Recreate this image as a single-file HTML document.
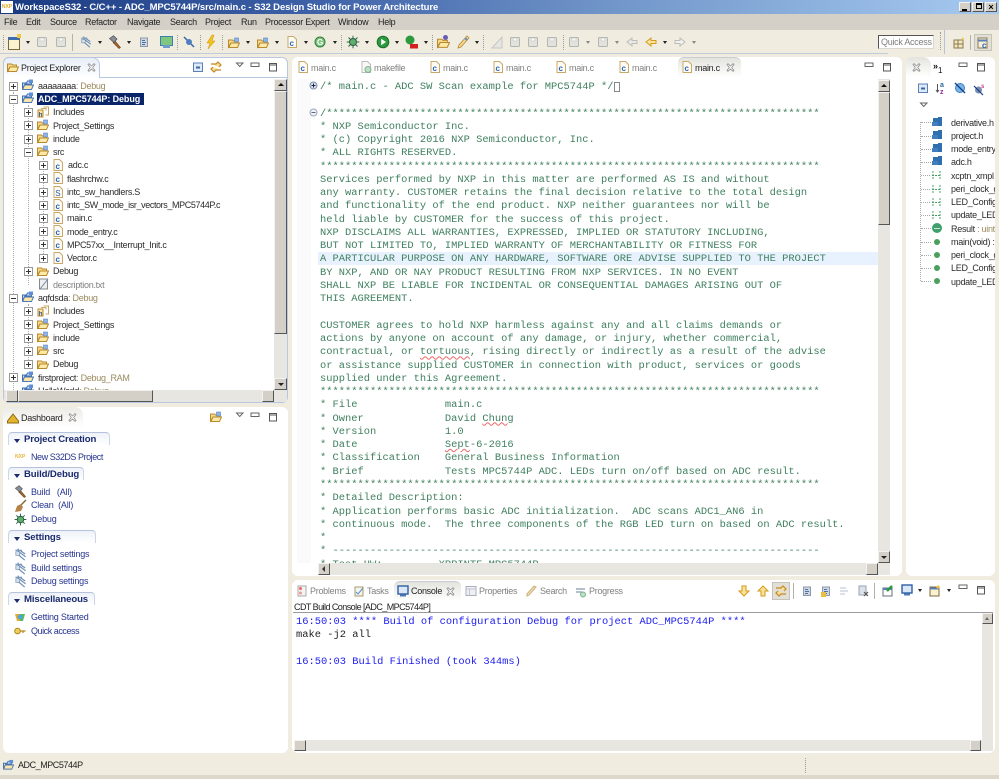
<!DOCTYPE html>
<html><head><meta charset="utf-8"><title>S32 Design Studio</title>
<style>
html,body{margin:0;padding:0}
body{width:999px;height:779px;position:relative;overflow:hidden;background:#f0ecdf;font-family:"Liberation Sans",sans-serif;filter:blur(.3px)}
.a{position:absolute}
.t{position:absolute;white-space:nowrap;font:9px/12px "Liberation Sans",sans-serif;letter-spacing:-.28px;color:#2b2b2b}
.g{color:#808080}.br{color:#9a8a5e}
.pane{position:absolute;background:#fff;border-radius:6px}
svg.i{position:absolute;width:12px;height:12px;overflow:visible}
svg.e{position:absolute;width:9px;height:9px}
.ar{position:absolute;width:0;height:0;border-left:2.5px solid transparent;border-right:2.5px solid transparent;border-top:3px solid #222}
.sep{position:absolute;width:0;border-left:1px dotted #999}
.sb{position:absolute;background:#e8e6e1}
.btn{position:absolute;background:#d4d0c8;border:1px solid;border-color:#f4f2ee #555 #555 #f4f2ee;box-sizing:border-box}
pre{margin:0;font:10.41px/13.25px "Liberation Mono",monospace}
.w{text-decoration:underline wavy #e66;text-decoration-thickness:1px}
.h{position:absolute;color:#1a2a6c;font:bold 9.6px/12px "Liberation Sans",sans-serif;letter-spacing:-.12px;white-space:nowrap}
.l{position:absolute;color:#27358f;font:9px/12px "Liberation Sans",sans-serif;letter-spacing:-.2px;white-space:nowrap}
.sec{position:absolute;height:12px;border-top:1px solid #b5c3dd;border-left:1px solid #ccd6e8;border-right:1px solid #ccd6e8;border-radius:4px 4px 0 0;background:linear-gradient(#eef2f8,#fff)}
.tri{position:absolute;width:0;height:0;border-left:3px solid transparent;border-right:3px solid transparent;border-top:4px solid #1a2a6c}
</style></head><body>
<svg width="0" height="0" style="position:absolute">
<defs>
<symbol id="cf" viewBox="0 0 12 12"><path d="M2 .5h5.5L10.5 3.500V11.500H2z" fill="#fdfbf4" stroke="#c8a96a"/><text x="3.500" y="10" font-family="Liberation Sans" font-weight="bold" font-size="8" fill="#2a66b8">c</text></symbol>
<symbol id="sf" viewBox="0 0 12 12"><path d="M2 .5h5.500L10.500 3.500V11.500H2z" fill="#fdfbf4" stroke="#c8a96a"/><text x="3.300" y="10" font-family="Liberation Sans" font-size="8" fill="#2a5fa8">S</text></symbol>
<symbol id="mf" viewBox="0 0 12 12"><path d="M2 .5h5.500L10.500 3.500V11.500H2z" fill="#f8f8f4" stroke="#bbb"/><circle cx="8" cy="8.500" r="3" fill="#bfe0c8" stroke="#7cb08a"/></symbol>
<symbol id="fo" viewBox="0 0 12 12"><path d="M.5 3h4l1 1h4v2H3L.5 10z" fill="#f6d98a" stroke="#b98a2c"/><path d="M3 6h8.500L9.500 10.500H.8z" fill="#fde9a8" stroke="#b98a2c"/></symbol>
<symbol id="fs" viewBox="0 0 12 12"><path d="M.5 3h4l1 1h4v2H3L.5 10z" fill="#f6d98a" stroke="#b98a2c"/><path d="M3 6h8.500L9.500 10.500H.8z" fill="#fde9a8" stroke="#b98a2c"/><rect x="6.500" y="1" width="4" height="4" fill="#8fb4e8" stroke="#5c82be" stroke-width=".6"/></symbol>
<symbol id="fi" viewBox="0 0 12 12"><path d="M1 4h5v7H1z" fill="#fbe6a8" stroke="#b98a2c"/><path d="M6.500 1h5v8h-3" fill="none" stroke="#c9a860"/><path d="M4 2.500h5v2" fill="none" stroke="#c9a860"/><text x="1.800" y="10.300" font-size="6" font-weight="bold" font-family="Liberation Sans" fill="#2a4f90">h</text></symbol>
<symbol id="pr" viewBox="0 0 12 12"><path d="M.5 4h4l1-2h4v3H3L.5 10z" fill="#cfe0f6" stroke="#3f6db0"/><path d="M2.500 6h9L9.500 10.500H.7z" fill="#fbe7a6" stroke="#4f78b4"/><rect x="7" y=".5" width="4" height="3.500" fill="#5d8fd8"/></symbol>
<symbol id="pl" viewBox="0 0 9 9"><rect x=".5" y=".5" width="8" height="8" fill="#fff" stroke="#999"/><path d="M2 4.500h5M4.500 2v5" stroke="#333"/></symbol>
<symbol id="mi" viewBox="0 0 9 9"><rect x=".5" y=".5" width="8" height="8" fill="#fff" stroke="#999"/><path d="M2 4.500h5" stroke="#333"/></symbol>
<symbol id="xx" viewBox="0 0 9 9"><path d="M1 1.500 2 .7 4.500 3 7 .7 8 1.500 5.700 4.500 8 7.500 7 8.300 4.500 6 2 8.300 1 7.500 3.300 4.500z" fill="#fff" stroke="#8a8a8a" stroke-width=".8"/></symbol>
<symbol id="mn" viewBox="0 0 10 10"><rect x="1" y="3" width="8" height="3.500" fill="#fff" stroke="#666"/></symbol>
<symbol id="mx" viewBox="0 0 10 10"><rect x="1.500" y="1.500" width="7" height="7.500" fill="#fff" stroke="#555"/><path d="M1.500 3h7" stroke="#555"/></symbol>
<symbol id="vm" viewBox="0 0 10 10"><path d="M1.500 3h6.500L4.700 6.500z" fill="#fff" stroke="#666"/></symbol>
<symbol id="co" viewBox="0 0 12 12"><rect x="1.500" y="2" width="9" height="8.500" fill="#dfeaf8" stroke="#5b7fb4"/><path d="M4 6.500h4" stroke="#3c64a6" stroke-width="2"/></symbol>
<symbol id="ln" viewBox="0 0 12 12"><path d="M1 3h5l2-2 3 3-2 2M11 9H6l-2 2-3-3 2-2" fill="#f8df9c" stroke="#c18a26" stroke-width="1.200"/></symbol>
<symbol id="hm" viewBox="0 0 14 14"><path d="M7 6l5.500 6.500-1.500 1L5 7.500z" fill="#a5662c" stroke="#6b3f18" stroke-width=".6"/><path d="M1.500 3.500 5.500 .7 9 4 6 7.500z" fill="#8a8f96" stroke="#4c4f55" stroke-width=".7"/></symbol>
<symbol id="bg" viewBox="0 0 14 14"><circle cx="7" cy="7" r="3.500" fill="#5fae6a" stroke="#20603a"/><path d="M7 .7v2.500M7 10.800v2.500M.7 7h2.500M10.800 7h2.500M2.500 2.500l2 2M11.500 2.500l-2 2M2.500 11.500l2-2M11.500 11.500l-2-2" stroke="#2f5f4c"/></symbol>
<symbol id="gr" viewBox="0 0 14 14"><circle cx="7" cy="7" r="5.800" fill="#2c9a3d" stroke="#1b6e2c"/><path d="M5.200 3.800 10 7l-4.800 3.200z" fill="#fff"/></symbol>
<symbol id="gy" viewBox="0 0 12 12"><rect x="1.500" y="1.500" width="9" height="9" rx="1" fill="#e2e2de" stroke="#b5b5b0"/><rect x="4" y="2" width="4" height="3" fill="#f5f5f2" stroke="#c0c0bb" stroke-width=".5"/></symbol>
<symbol id="st" viewBox="0 0 12 12"><rect x="2.500" y="2" width="7" height="8.500" fill="#cfd6de" stroke="#8a9aac"/><path d="M4 4.500h3M4 6.500h4M4 8.500h3" stroke="#4c71a8"/></symbol>
<symbol id="gs" viewBox="0 0 14 14"><path d="M1.500 2.500h7M4 .8l1 1M2 5l9.500 8M4.500 3.500l8 6M7 3l5 3.500" stroke="#6f8fb4" stroke-width="1.300" fill="none"/><rect x="2" y="4" width="4" height="4" fill="#d4e0ec" stroke="#5d7fa6" stroke-width=".6"/></symbol>
</defs>
</svg>

<!-- Title bar -->
<div class="a" style="left:0;top:0;width:999px;height:14px;background:linear-gradient(90deg,#1a3a80,#3c5fa6 30%,#6f94c8 60%,#a6caf0)"></div>
<div class="a" style="left:1px;top:1px;width:12px;height:12px;background:#fff;font:bold 5px/12px 'Liberation Sans',sans-serif;color:#e5a823;text-align:center">NXP</div>
<div class="t" style="left:15px;top:1px;color:#fff;font:bold 9.5px/13px 'Liberation Sans',sans-serif;letter-spacing:-.1px">WorkspaceS32 - C/C++ - ADC_MPC5744P/src/main.c - S32 Design Studio for Power Architecture</div>
<div class="btn" style="left:959px;top:2px;width:12px;height:10px"><div class="a" style="left:2px;top:6px;width:5px;height:2px;background:#000"></div></div>
<div class="btn" style="left:972px;top:2px;width:12px;height:10px"><div class="a" style="left:3px;top:0;width:6px;height:6px;border:1px solid #000;border-top-width:2px;box-sizing:border-box"></div></div>
<div class="btn" style="left:985px;top:2px;width:12px;height:10px;font:bold 9px/8px 'Liberation Sans';text-align:center;color:#000">×</div>

<!-- Menu -->
<div class="a" style="left:0;top:14px;width:999px;height:16px;background:#d4d0c8"></div>
<div class="t" style="left:4px;top:16px;color:#222">File</div>
<div class="t" style="left:26px;top:16px;color:#222">Edit</div>
<div class="t" style="left:50px;top:16px;color:#222">Source</div>
<div class="t" style="left:85px;top:16px;color:#222">Refactor</div>
<div class="t" style="left:127px;top:16px;color:#222">Navigate</div>
<div class="t" style="left:170px;top:16px;color:#222">Search</div>
<div class="t" style="left:205px;top:16px;color:#222">Project</div>
<div class="t" style="left:241px;top:16px;color:#222">Run</div>
<div class="t" style="left:265px;top:16px;color:#222">Processor Expert</div>
<div class="t" style="left:338px;top:16px;color:#222">Window</div>
<div class="t" style="left:378px;top:16px;color:#222">Help</div>

<!-- Toolbar -->
<div class="a" style="left:0;top:30px;width:999px;height:24px;background:#f0ecdf"></div>
<div class="a" style="left:0;top:53px;width:888px;height:1px;background:#c2cbdc"></div>
<div class="sep" style="left:3px;top:35px;height:15px"></div>
<svg class="i" style="left:8px;top:36px"><use href="#gy"/></svg>
<div class="a" style="left:8px;top:37px;width:10px;height:9px;background:#fbf2cf;border:1px solid #7a6a3f;border-top:3px solid #3c6cb0"></div>
<div class="a" style="left:17px;top:34px;width:4px;height:4px;background:#f1c644"></div>
<div class="ar" style="left:26px;top:41px"></div>
<svg class="i" style="left:36px;top:36px"><use href="#gy"/></svg>
<svg class="i" style="left:55px;top:36px"><use href="#gy"/></svg>
<div class="a" style="left:72px;top:34px;width:1px;height:17px;background:#b5b2a8"></div>
<svg class="i" style="left:80px;top:36px"><use href="#gs"/></svg>
<div class="ar" style="left:98px;top:41px"></div>
<svg class="i" style="left:108px;top:35px;width:14px;height:14px"><use href="#hm"/></svg>
<div class="ar" style="left:127px;top:41px"></div>
<svg class="i" style="left:138px;top:36px"><use href="#st"/></svg>
<div class="a" style="left:160px;top:36px;width:11px;height:8px;background:#7fc77f;border:1px solid #3a7fb0"></div><div class="a" style="left:163px;top:45px;width:7px;height:3px;background:#6d9ccc"></div>
<div class="sep" style="left:177px;top:35px;height:15px"></div>
<svg class="i" style="left:183px;top:36px"><path d="M1 1l10 10" stroke="#3c64a6" stroke-width="1.500"/><circle cx="6" cy="6" r="3" fill="#4d7fbf"/></svg>
<div class="sep" style="left:200px;top:35px;height:15px"></div>
<svg class="i" style="left:205px;top:35px;height:14px"><path d="M7 0 2 8h3L3 14l7-8H7l2-6z" fill="#f5c21d" stroke="#c98f10" stroke-width=".5"/></svg>
<div class="sep" style="left:222px;top:35px;height:15px"></div>
<svg class="i" style="left:228px;top:37px"><use href="#fs"/></svg><div class="ar" style="left:246px;top:41px"></div>
<svg class="i" style="left:257px;top:37px"><use href="#fs"/></svg><div class="ar" style="left:275px;top:41px"></div>
<svg class="i" style="left:286px;top:36px"><use href="#cf"/></svg><div class="ar" style="left:304px;top:41px"></div>
<svg class="i" style="left:314px;top:36px"><circle cx="6" cy="6" r="5" fill="#7cc47c" stroke="#2f7f3c"/><text x="3" y="9" font-size="8" font-weight="bold" font-family="Liberation Sans" fill="#fff">G</text></svg><div class="ar" style="left:333px;top:41px"></div>
<div class="sep" style="left:341px;top:35px;height:15px"></div>
<svg class="i" style="left:346px;top:35px;width:14px;height:14px"><use href="#bg"/></svg><div class="ar" style="left:365px;top:41px"></div>
<svg class="i" style="left:376px;top:35px;width:14px;height:14px"><use href="#gr"/></svg><div class="ar" style="left:395px;top:41px"></div>
<svg class="i" style="left:405px;top:35px;width:14px;height:14px"><circle cx="5" cy="5" r="4.500" fill="#2c9a3d"/><rect x="5" y="9" width="8" height="4.500" fill="#d42020"/></svg><div class="ar" style="left:424px;top:41px"></div>
<div class="sep" style="left:432px;top:35px;height:15px"></div>
<svg class="i" style="left:437px;top:36px;width:13px;height:13px"><use href="#fo"/></svg><div class="a" style="left:443px;top:35px;width:5px;height:5px;border-radius:3px;background:#6a5fb4"></div>
<svg class="i" style="left:456px;top:35px;width:14px;height:14px"><path d="M2 13l3-1 8-9-2-2-8 9z" fill="#f3d79a" stroke="#b98a2c" stroke-width=".8"/><path d="M9 3l2 2" stroke="#6d8fc4" stroke-width="2"/></svg><div class="ar" style="left:475px;top:41px"></div>
<div class="sep" style="left:483px;top:35px;height:15px"></div>
<svg class="i" style="left:490px;top:35px;width:14px;height:14px"><path d="M2 13l10-11v11z" fill="#e6e6e2" stroke="#c6c6c2"/></svg>
<svg class="i" style="left:509px;top:36px"><use href="#gy"/></svg>
<svg class="i" style="left:527px;top:36px"><use href="#gy"/></svg>
<svg class="i" style="left:546px;top:36px"><use href="#gy"/></svg>
<div class="sep" style="left:563px;top:35px;height:15px"></div>
<svg class="i" style="left:568px;top:36px"><use href="#gy"/></svg><div class="ar" style="left:586px;top:41px;border-top-color:#888"></div>
<svg class="i" style="left:597px;top:36px"><use href="#gy"/></svg><div class="ar" style="left:615px;top:41px;border-top-color:#888"></div>
<svg class="i" style="left:626px;top:36px"><path d="M1 6l5-4v2.500h5v3H6V10z" fill="#e8e8e4" stroke="#bdbdb8"/></svg>
<svg class="i" style="left:645px;top:36px"><path d="M1 6l5-4v2.500h5v3H6V10z" fill="#fbe49c" stroke="#d39a1e"/></svg><div class="ar" style="left:663px;top:41px"></div>
<svg class="i" style="left:674px;top:36px"><path d="M11 6 6 2v2.500H1v3h5V10z" fill="#f2f2ee" stroke="#bdbdb8"/></svg><div class="ar" style="left:692px;top:41px;border-top-color:#888"></div>
<div class="a" style="left:878px;top:35px;width:56px;height:14px;background:#fff;box-sizing:border-box;border:1px solid;border-color:#555 #d8d8d0 #d8d8d0 #555"></div>
<div class="t g" style="left:881px;top:36px">Quick Access</div>
<div class="sep" style="left:940px;top:32px;height:18px"></div>
<div class="a" style="left:944px;top:30px;width:1px;height:24px;background:#b8c2d4"></div>
<svg class="i" style="left:953px;top:37px"><rect x="1" y="3" width="9" height="8" fill="#f3e6c0" stroke="#8a7a50"/><path d="M1 7h9M5 3v8" stroke="#8a7a50"/><path d="M9 0l2 2-2 2z" fill="#efc13a"/></svg>
<div class="a" style="left:970px;top:35px;width:1px;height:15px;background:#b5b2a8"></div>
<div class="a" style="left:974px;top:34px;width:18px;height:17px;background:#e2e0d6;border:1px solid #c6c4ba;box-sizing:border-box"></div>
<svg class="i" style="left:977px;top:37px"><rect x="1" y="1" width="9" height="10" fill="#f6f0d8" stroke="#8a7a50"/><path d="M1 3.500h9" stroke="#5b7fb4" stroke-width="2"/><text x="5" y="11" font-size="8" font-weight="bold" font-family="Liberation Sans" fill="#2a66b8">c</text></svg>

<!-- Project Explorer -->
<div class="pane" style="left:3px;top:57px;width:285px;height:346px;box-sizing:border-box;border:1px solid #b7c7e0"></div>
<div class="a" style="left:3px;top:57px;width:97px;height:21px;box-sizing:border-box;border:1px solid #b7c7e0;border-bottom:0;border-radius:6px 8px 0 0;background:linear-gradient(#e8eef8,#fff)"></div>
<div class="a" style="left:100px;top:77px;width:188px;height:1px;background:#b7c7e0"></div>
<svg class="i" style="left:7px;top:61px"><use href="#fo"/></svg>
<div class="t" style="left:21px;top:62px;color:#222">Project Explorer</div>
<svg class="e" style="left:87px;top:63px"><use href="#xx"/></svg>
<svg class="i" style="left:192px;top:61px"><use href="#co"/></svg>
<svg class="i" style="left:210px;top:61px"><use href="#ln"/></svg>
<svg class="i" style="left:235px;top:60px;width:10px;height:10px"><use href="#vm"/></svg>
<svg class="i" style="left:250px;top:60px;width:10px;height:10px"><use href="#mn"/></svg>
<svg class="i" style="left:268px;top:62px;width:10px;height:10px"><use href="#mx"/></svg>

<!-- tree lines -->
<div class="a" style="left:13px;top:92px;height:300px;border-left:1px dotted #aaa"></div>
<div class="a" style="left:28px;top:105px;height:180px;border-left:1px dotted #aaa"></div>
<div class="a" style="left:43px;top:158px;height:100px;border-left:1px dotted #aaa"></div>
<div class="a" style="left:28px;top:304px;height:60px;border-left:1px dotted #aaa"></div>

<svg class="e" style="left:9px;top:82px"><use href="#pl"/></svg><svg class="i" style="left:22px;top:79px"><use href="#pr"/></svg><div class="t" style="left:38px;top:80px">aaaaaaaa<span class="br">: Debug</span></div>
<svg class="e" style="left:9px;top:95px"><use href="#mi"/></svg><svg class="i" style="left:22px;top:92px"><use href="#pr"/></svg>
<div class="a" style="left:37px;top:93px;width:107px;height:12px;background:#0a246a"></div><div class="t" style="left:38px;top:93px;color:#fff;font-weight:bold;font-size:9px;letter-spacing:-.1px">ADC_MPC5744P: Debug</div>

<svg class="e" style="left:24px;top:108px"><use href="#pl"/></svg><svg class="i" style="left:37px;top:106px"><use href="#fi"/></svg><div class="t" style="left:53px;top:106px">Includes</div>
<svg class="e" style="left:24px;top:121px"><use href="#pl"/></svg><svg class="i" style="left:37px;top:119px"><use href="#fs"/></svg><div class="t" style="left:53px;top:120px">Project_Settings</div>
<svg class="e" style="left:24px;top:135px"><use href="#pl"/></svg><svg class="i" style="left:37px;top:132px"><use href="#fs"/></svg><div class="t" style="left:53px;top:133px">include</div>
<svg class="e" style="left:24px;top:148px"><use href="#mi"/></svg><svg class="i" style="left:37px;top:145px"><use href="#fs"/></svg><div class="t" style="left:53px;top:146px">src</div>

<svg class="e" style="left:39px;top:161px"><use href="#pl"/></svg><svg class="i" style="left:52px;top:159px"><use href="#cf"/></svg><div class="t" style="left:68px;top:159px">adc.c</div>
<svg class="e" style="left:39px;top:174px"><use href="#pl"/></svg><svg class="i" style="left:52px;top:172px"><use href="#cf"/></svg><div class="t" style="left:67px;top:173px">flashrchw.c</div>
<svg class="e" style="left:39px;top:188px"><use href="#pl"/></svg><svg class="i" style="left:52px;top:186px"><use href="#sf"/></svg><div class="t" style="left:67px;top:186px">intc_sw_handlers.S</div>
<svg class="e" style="left:39px;top:201px"><use href="#pl"/></svg><svg class="i" style="left:52px;top:199px"><use href="#cf"/></svg><div class="t" style="left:67px;top:199px;letter-spacing:-.38px">intc_SW_mode_isr_vectors_MPC5744P.c</div>
<svg class="e" style="left:39px;top:214px"><use href="#pl"/></svg><svg class="i" style="left:52px;top:212px"><use href="#cf"/></svg><div class="t" style="left:67px;top:212px">main.c</div>
<svg class="e" style="left:39px;top:227px"><use href="#pl"/></svg><svg class="i" style="left:52px;top:225px"><use href="#cf"/></svg><div class="t" style="left:67px;top:226px">mode_entry.c</div>
<svg class="e" style="left:39px;top:240px"><use href="#pl"/></svg><svg class="i" style="left:52px;top:238px"><use href="#cf"/></svg><div class="t" style="left:67px;top:239px">MPC57xx__Interrupt_Init.c</div>
<svg class="e" style="left:39px;top:254px"><use href="#pl"/></svg><svg class="i" style="left:52px;top:252px"><use href="#cf"/></svg><div class="t" style="left:67px;top:252px">Vector.c</div>
<svg class="e" style="left:24px;top:267px"><use href="#pl"/></svg><svg class="i" style="left:37px;top:265px"><use href="#fo"/></svg><div class="t" style="left:53px;top:265px">Debug</div>
<svg class="i" style="left:38px;top:278px"><path d="M1.500 1h8v10h-8z" fill="#eee" stroke="#888"/><path d="M2 11 10 1" stroke="#6d86b0"/></svg><div class="t g" style="left:53px;top:279px">description.txt</div>

<svg class="e" style="left:9px;top:294px"><use href="#mi"/></svg><svg class="i" style="left:22px;top:291px"><use href="#pr"/></svg><div class="t" style="left:38px;top:292px">aqfdsda<span class="br">: Debug</span></div>
<svg class="e" style="left:24px;top:307px"><use href="#pl"/></svg><svg class="i" style="left:37px;top:305px"><use href="#fi"/></svg><div class="t" style="left:53px;top:305px">Includes</div>
<svg class="e" style="left:24px;top:320px"><use href="#pl"/></svg><svg class="i" style="left:37px;top:318px"><use href="#fs"/></svg><div class="t" style="left:53px;top:319px">Project_Settings</div>
<svg class="e" style="left:24px;top:334px"><use href="#pl"/></svg><svg class="i" style="left:37px;top:331px"><use href="#fs"/></svg><div class="t" style="left:53px;top:332px">include</div>
<svg class="e" style="left:24px;top:347px"><use href="#pl"/></svg><svg class="i" style="left:37px;top:344px"><use href="#fs"/></svg><div class="t" style="left:53px;top:345px">src</div>
<svg class="e" style="left:24px;top:360px"><use href="#pl"/></svg><svg class="i" style="left:37px;top:358px"><use href="#fo"/></svg><div class="t" style="left:53px;top:358px">Debug</div>
<svg class="e" style="left:9px;top:373px"><use href="#pl"/></svg><svg class="i" style="left:22px;top:371px"><use href="#pr"/></svg><div class="t" style="left:38px;top:372px">firstproject<span class="br">: Debug_RAM</span></div>
<div class="a" style="left:4px;top:384px;width:270px;height:6px;overflow:hidden"><svg class="i" style="left:18px;top:0"><use href="#pr"/></svg><div class="t" style="left:34px;top:1px">HelloWorld<span class="br">: Debug</span></div></div>

<!-- PE scroll -->
<div class="sb" style="left:274px;top:79px;width:13px;height:311px"></div>
<div class="btn" style="left:274px;top:79px;width:13px;height:12px"><div class="ar" style="left:2.500px;top:3px;border-top:0;border-bottom:3px solid #111;border-left-width:3px;border-right-width:3px"></div></div>
<div class="btn" style="left:274px;top:91px;width:13px;height:243px"></div>
<div class="btn" style="left:274px;top:378px;width:13px;height:12px"><div class="ar" style="left:2.500px;top:4px;border-left-width:3px;border-right-width:3px"></div></div>
<div class="sb" style="left:4px;top:390px;width:283px;height:12px"></div>
<div class="btn" style="left:6px;top:390px;width:12px;height:12px"></div>
<div class="btn" style="left:18px;top:390px;width:135px;height:12px"></div>
<div class="btn" style="left:262px;top:390px;width:12px;height:12px"></div>

<!-- Dashboard -->
<div class="pane" style="left:3px;top:407px;width:285px;height:346px"></div>
<div class="a" style="left:3px;top:407px;width:80px;height:20px;border-radius:6px 8px 0 0;background:linear-gradient(#ecebe4,#fff)"></div>
<svg class="i" style="left:7px;top:412px"><path d="M.5 9 6 2l5.500 7v2h-11z" fill="#e3b52f" stroke="#8a6a10"/></svg>
<div class="t" style="left:21px;top:412px;color:#222">Dashboard</div>
<svg class="e" style="left:68px;top:413px"><use href="#xx"/></svg>
<svg class="i" style="left:210px;top:411px"><use href="#fs"/></svg>
<svg class="i" style="left:235px;top:410px;width:10px;height:10px"><use href="#vm"/></svg>
<svg class="i" style="left:250px;top:410px;width:10px;height:10px"><use href="#mn"/></svg>
<svg class="i" style="left:268px;top:412px;width:10px;height:10px"><use href="#mx"/></svg>

<div class="sec" style="left:8px;top:432px;width:100px"></div><div class="tri" style="left:14px;top:439px"></div><div class="h" style="left:24px;top:434px">Project Creation</div>
<div class="a" style="left:15px;top:454px;font:bold 5px/6px 'Liberation Sans';color:#e5b53a">NXP</div><div class="l" style="left:31px;top:451px;letter-spacing:-.45px">New S32DS Project</div>
<div class="sec" style="left:8px;top:467px;width:74px"></div><div class="tri" style="left:14px;top:474px"></div><div class="h" style="left:24px;top:469px">Build/Debug</div>
<svg class="i" style="left:14px;top:485px;width:13px;height:13px"><use href="#hm"/></svg><div class="l" style="left:31px;top:486px">Build &nbsp; (All)</div>
<svg class="i" style="left:14px;top:499px;width:13px;height:13px"><path d="M12 1 7 6" stroke="#8a6a3a" stroke-width="1.500"/><path d="M3 7l4-2 2 3-2 4-6 1z" fill="#b5824a"/></svg><div class="l" style="left:31px;top:499px">Clean &nbsp;(All)</div>
<svg class="i" style="left:14px;top:513px;width:13px;height:13px"><use href="#bg"/></svg><div class="l" style="left:31px;top:513px">Debug</div>
<div class="sec" style="left:8px;top:530px;width:86px"></div><div class="tri" style="left:14px;top:537px"></div><div class="h" style="left:24px;top:532px">Settings</div>
<svg class="i" style="left:14px;top:548px;width:13px;height:13px"><use href="#gs"/></svg><div class="l" style="left:31px;top:548px">Project settings</div>
<svg class="i" style="left:14px;top:562px;width:13px;height:13px"><use href="#gs"/></svg><div class="l" style="left:31px;top:562px">Build settings</div>
<svg class="i" style="left:14px;top:575px;width:13px;height:13px"><use href="#gs"/></svg><div class="l" style="left:31px;top:575px">Debug settings</div>
<div class="sec" style="left:8px;top:592px;width:85px"></div><div class="tri" style="left:14px;top:599px"></div><div class="h" style="left:24px;top:594px">Miscellaneous</div>
<svg class="i" style="left:14px;top:611px"><path d="M1 3h5v7H3z" fill="#e8a92c"/><path d="M6 3h5l-2 7H6z" fill="#5cb85c"/><circle cx="6" cy="6" r="2.500" fill="#4aa8d8"/></svg><div class="l" style="left:31px;top:611px">Getting Started</div>
<svg class="i" style="left:14px;top:625px"><circle cx="3.500" cy="6" r="2.800" fill="#f1cf5a" stroke="#b08a1c"/><path d="M6 6h5.500M9 6v2" stroke="#b08a1c" stroke-width="1.200"/></svg><div class="l" style="left:31px;top:625px;letter-spacing:-.45px">Quick access</div>

<!-- Editor -->
<div class="pane" style="left:292px;top:57px;width:610px;height:519px"></div>
<svg class="i" style="left:297px;top:61px"><use href="#cf"/></svg><div class="t g" style="left:311px;top:62px">main.c</div>
<svg class="i" style="left:360px;top:61px"><use href="#mf"/></svg><div class="t g" style="left:374px;top:62px">makefile</div>
<svg class="i" style="left:429px;top:61px"><use href="#cf"/></svg><div class="t g" style="left:443px;top:62px">main.c</div>
<svg class="i" style="left:492px;top:61px"><use href="#cf"/></svg><div class="t g" style="left:506px;top:62px">main.c</div>
<svg class="i" style="left:555px;top:61px"><use href="#cf"/></svg><div class="t g" style="left:569px;top:62px">main.c</div>
<svg class="i" style="left:618px;top:61px"><use href="#cf"/></svg><div class="t g" style="left:632px;top:62px">main.c</div>
<div class="a" style="left:678px;top:57px;width:63px;height:20px;border-radius:6px 6px 0 0;background:linear-gradient(#e4e4de,#fff);border-top:1px solid #c8ccd4;box-sizing:border-box"></div>
<svg class="i" style="left:681px;top:61px"><use href="#cf"/></svg><div class="t" style="left:695px;top:62px;color:#222">main.c</div>
<svg class="e" style="left:726px;top:63px"><use href="#xx"/></svg>
<svg class="i" style="left:864px;top:60px;width:10px;height:10px"><use href="#mn"/></svg>
<svg class="i" style="left:882px;top:62px;width:10px;height:10px"><use href="#mx"/></svg>

<div class="a" style="left:297px;top:79px;width:14px;height:484px;background:#fafafa"></div>
<div class="a" style="left:318px;top:252px;width:560px;height:13px;background:#e8f2fe"></div>
<svg class="e" style="left:309px;top:81px"><circle cx="4.500" cy="4.500" r="3.500" fill="#d8e2f0" stroke="#7a8fb0"/><path d="M2.500 4.500h4M4.500 2.500v4" stroke="#223"/></svg>
<svg class="e" style="left:309px;top:108px"><circle cx="4.500" cy="4.500" r="3.500" fill="#eef2f8" stroke="#9aa8c0"/><path d="M2.500 4.500h4" stroke="#667"/></svg>
<div class="a" style="left:320px;top:81px;width:558px;height:482px;overflow:hidden"><pre style="color:#3f7f5f;line-height:13.27px">/* main.c - ADC SW Scan example for MPC5744P */

/*******************************************************************************
* NXP Semiconductor Inc.
* (c) Copyright 2016 NXP Semiconductor, Inc.
* ALL RIGHTS RESERVED.
********************************************************************************
Services performed by NXP in this matter are performed AS IS and without
any warranty. CUSTOMER retains the final decision relative to the total design
and functionality of the end product. NXP neither guarantees nor will be
held liable by CUSTOMER for the success of this project.
NXP DISCLAIMS ALL WARRANTIES, EXPRESSED, IMPLIED OR STATUTORY INCLUDING,
BUT NOT LIMITED TO, IMPLIED WARRANTY OF MERCHANTABILITY OR FITNESS FOR
A PARTICULAR PURPOSE ON ANY HARDWARE, SOFTWARE ORE ADVISE SUPPLIED TO THE PROJECT
BY NXP, AND OR NAY PRODUCT RESULTING FROM NXP SERVICES. IN NO EVENT
SHALL NXP BE LIABLE FOR INCIDENTAL OR CONSEQUENTIAL DAMAGES ARISING OUT OF
THIS AGREEMENT.

CUSTOMER agrees to hold NXP harmless against any and all claims demands or
actions by anyone on account of any damage, or injury, whether commercial,
contractual, or <span class="w">tortuous</span>, rising directly or indirectly as a result of the advise
or assistance supplied CUSTOMER in connection with product, services or goods
supplied under this Agreement.
********************************************************************************
* File              main.c
* Owner             David <span class="w">Chung</span>
* Version           1.0
* Date              <span class="w">Sept</span>-6-2016
* Classification    General Business Information
* Brief             Tests MPC5744P ADC. LEDs turn on/off based on ADC result.
********************************************************************************
* Detailed Description:
* Application performs basic ADC initialization.  ADC scans ADC1_AN6 in
* continuous mode.  The three components of the RGB LED turn on based on ADC result.
*
* ------------------------------------------------------------------------------
* Test HW:         XPRINTF MPC5744P</pre></div>
<div class="a" style="left:614px;top:82px;width:6px;height:10px;border:1px solid #888;box-sizing:border-box"></div>

<!-- Editor scroll -->
<div class="sb" style="left:878px;top:79px;width:12px;height:484px"></div>
<div class="btn" style="left:878px;top:80px;width:12px;height:12px"><div class="ar" style="left:2px;top:3px;border-top:0;border-bottom:3px solid #111;border-left-width:3px;border-right-width:3px"></div></div>
<div class="btn" style="left:878px;top:92px;width:12px;height:133px"></div>
<div class="btn" style="left:878px;top:551px;width:12px;height:12px"><div class="ar" style="left:2px;top:4px;border-left-width:3px;border-right-width:3px"></div></div>
<div class="sb" style="left:318px;top:563px;width:572px;height:12px"></div>
<div class="btn" style="left:318px;top:563px;width:12px;height:12px"><div class="a" style="left:3px;top:2px;width:0;height:0;border-top:3px solid transparent;border-bottom:3px solid transparent;border-right:3px solid #333"></div></div>
<div class="btn" style="left:866px;top:563px;width:12px;height:12px"></div>

<!-- Outline -->
<div class="pane" style="left:906px;top:57px;width:89px;height:519px"></div>
<div class="a" style="left:906px;top:57px;width:25px;height:20px;border-radius:6px 8px 0 0;background:linear-gradient(#e4e4de,#fff)"></div>
<svg class="e" style="left:912px;top:63px"><use href="#xx"/></svg>
<div class="t" style="left:933px;top:60px;font-weight:bold;color:#111;font-size:9px">»</div><div class="t" style="left:938px;top:65px;font-size:8px;color:#111">1</div>
<svg class="i" style="left:958px;top:60px;width:10px;height:10px"><use href="#mn"/></svg>
<svg class="i" style="left:976px;top:62px;width:10px;height:10px"><use href="#mx"/></svg>
<svg class="i" style="left:917px;top:82px"><use href="#co"/></svg>
<svg class="i" style="left:935px;top:81px;height:14px"><path d="M2.500 3v8M1 9l1.500 2L4 9" stroke="#555" fill="none"/><text x="5" y="6" font-size="7" font-weight="bold" font-family="Liberation Sans" fill="#2a6a9a">a</text><text x="5" y="13" font-size="7" font-weight="bold" font-family="Liberation Sans" fill="#9a2aa0">z</text></svg>
<svg class="i" style="left:954px;top:82px"><circle cx="6" cy="6" r="4.500" fill="#79b7e8" stroke="#3b80c0"/><path d="M1 1l10 10" stroke="#1a3a8a" stroke-width="1.300"/></svg>
<svg class="i" style="left:973px;top:83px"><circle cx="5.500" cy="7" r="3.500" fill="#7a8fb0"/><path d="M1 3l9 9" stroke="#1a3a8a" stroke-width="1.200"/><text x="8" y="5" font-size="6" font-weight="bold" font-family="Liberation Sans" fill="#d0409a">s</text></svg>
<svg class="i" style="left:919px;top:100px;width:10px;height:10px"><use href="#vm"/></svg>
<div class="a" style="left:920px;top:122px;height:159px;border-left:1px dotted #aaa"></div>
<div class="a" style="left:921px;top:122px;width:10px;border-top:1px dotted #aaa"></div><div class="a" style="left:933px;top:118px;width:5px;height:4px;background:#2f6fb0"></div><div class="a" style="left:938px;top:117px;width:4px;height:9px;background:#2f6fb0"></div><div class="a" style="left:932px;top:122px;width:6px;height:4px;background:#3f7fc0"></div><div class="t" style="left:951px;top:117px;width:44px;overflow:hidden">derivative.h</div>
<div class="a" style="left:921px;top:136px;width:10px;border-top:1px dotted #aaa"></div><div class="a" style="left:933px;top:131px;width:5px;height:4px;background:#2f6fb0"></div><div class="a" style="left:938px;top:130px;width:4px;height:9px;background:#2f6fb0"></div><div class="a" style="left:932px;top:135px;width:6px;height:4px;background:#3f7fc0"></div><div class="t" style="left:951px;top:130px;width:44px;overflow:hidden">project.h</div>
<div class="a" style="left:921px;top:149px;width:10px;border-top:1px dotted #aaa"></div><div class="a" style="left:933px;top:144px;width:5px;height:4px;background:#2f6fb0"></div><div class="a" style="left:938px;top:143px;width:4px;height:9px;background:#2f6fb0"></div><div class="a" style="left:932px;top:148px;width:6px;height:4px;background:#3f7fc0"></div><div class="t" style="left:951px;top:143px;width:44px;overflow:hidden">mode_entry.h</div>
<div class="a" style="left:921px;top:162px;width:10px;border-top:1px dotted #aaa"></div><div class="a" style="left:933px;top:157px;width:5px;height:4px;background:#2f6fb0"></div><div class="a" style="left:938px;top:156px;width:4px;height:9px;background:#2f6fb0"></div><div class="a" style="left:932px;top:161px;width:6px;height:4px;background:#3f7fc0"></div><div class="t" style="left:951px;top:156px;width:44px;overflow:hidden">adc.h</div>
<svg class="i" style="left:921px;top:170px;width:24px"><path d="M0 5.500h9" stroke="#aaa" stroke-dasharray="1 1"/><path d="M11 5.500h9M12 1v9M19 1v9" stroke="#4ea06a" stroke-dasharray="2 1"/></svg><div class="t" style="left:951px;top:170px;width:44px;overflow:hidden">xcptn_xmpl</div>
<svg class="i" style="left:921px;top:184px;width:24px"><path d="M0 5.500h9" stroke="#aaa" stroke-dasharray="1 1"/><path d="M11 5.500h9M12 1v9M19 1v9" stroke="#4ea06a" stroke-dasharray="2 1"/></svg><div class="t" style="left:951px;top:183px;width:44px;overflow:hidden">peri_clock_gating</div>
<svg class="i" style="left:921px;top:197px;width:24px"><path d="M0 5.500h9" stroke="#aaa" stroke-dasharray="1 1"/><path d="M11 5.500h9M12 1v9M19 1v9" stroke="#4ea06a" stroke-dasharray="2 1"/></svg><div class="t" style="left:951px;top:196px;width:44px;overflow:hidden">LED_Config(</div>
<svg class="i" style="left:921px;top:210px;width:24px"><path d="M0 5.500h9" stroke="#aaa" stroke-dasharray="1 1"/><path d="M11 5.500h9M12 1v9M19 1v9" stroke="#4ea06a" stroke-dasharray="2 1"/></svg><div class="t" style="left:951px;top:209px;width:44px;overflow:hidden">update_LEDs</div>
<div class="a" style="left:921px;top:228px;width:10px;border-top:1px dotted #aaa"></div><div class="a" style="left:932px;top:223px;width:10px;height:10px;border-radius:5px;background:#3fa06c"></div><div class="a" style="left:934px;top:228px;width:6px;height:1px;background:#c8e8d4"></div><div class="t" style="left:951px;top:223px;width:44px;overflow:hidden">Result<span class="br"> : uint32</span></div>
<div class="a" style="left:921px;top:242px;width:10px;border-top:1px dotted #aaa"></div><div class="a" style="left:934px;top:239px;width:6px;height:6px;border-radius:3px;background:#4a9f5c"></div><div class="t" style="left:951px;top:236px;width:44px;overflow:hidden">main(void) : int</div>
<div class="a" style="left:921px;top:255px;width:10px;border-top:1px dotted #aaa"></div><div class="a" style="left:934px;top:252px;width:6px;height:6px;border-radius:3px;background:#4a9f5c"></div><div class="t" style="left:951px;top:249px;width:44px;overflow:hidden">peri_clock_gating</div>
<div class="a" style="left:921px;top:268px;width:10px;border-top:1px dotted #aaa"></div><div class="a" style="left:934px;top:265px;width:6px;height:6px;border-radius:3px;background:#4a9f5c"></div><div class="t" style="left:951px;top:262px;width:44px;overflow:hidden">LED_Config(</div>
<div class="a" style="left:921px;top:281px;width:10px;border-top:1px dotted #aaa"></div><div class="a" style="left:934px;top:278px;width:6px;height:6px;border-radius:3px;background:#4a9f5c"></div><div class="t" style="left:951px;top:276px;width:44px;overflow:hidden">update_LEDs</div>

<!-- Console -->
<div class="pane" style="left:292px;top:580px;width:703px;height:173px"></div>
<svg class="i" style="left:296px;top:585px"><rect x="2" y="1" width="8" height="10" fill="#f4f4f0" stroke="#aaa"/><circle cx="4.500" cy="3.500" r="1.500" fill="#e66"/><circle cx="4.500" cy="8" r="1.500" fill="#e99"/></svg><div class="t g" style="left:310px;top:585px">Problems</div>
<svg class="i" style="left:353px;top:585px"><rect x="2" y="2" width="8" height="9" fill="#f4f4f0" stroke="#a99a6a"/><path d="M3 7l2 2 5-6" stroke="#5b8fc8" fill="none"/></svg><div class="t g" style="left:367px;top:585px">Tasks</div>
<div class="a" style="left:394px;top:581px;width:67px;height:20px;border-radius:6px 6px 0 0;background:linear-gradient(#e4e4de,#fff);border-top:1px solid #c8ccd4;box-sizing:border-box"></div>
<svg class="i" style="left:397px;top:585px"><rect x="1" y="1" width="10" height="8" fill="#dbe7f6" stroke="#2f5fa6" stroke-width="1.400"/><rect x="3" y="9.500" width="6" height="2" fill="#4f78b4"/></svg><div class="t" style="left:411px;top:585px;color:#222">Console</div>
<svg class="e" style="left:446px;top:587px"><use href="#xx"/></svg>
<svg class="i" style="left:465px;top:585px"><rect x="1" y="1.500" width="10" height="9" fill="#eef0f4" stroke="#a9b0bc"/><path d="M1 4h10M4.500 4v6.500" stroke="#c0c5d0"/></svg><div class="t g" style="left:479px;top:585px">Properties</div>
<svg class="i" style="left:525px;top:585px"><path d="M2 11l2-1 7-8-2-1-7 8z" fill="#f3e2b8" stroke="#c9b27a"/></svg><div class="t g" style="left:540px;top:585px">Search</div>
<svg class="i" style="left:575px;top:586px"><path d="M1 3h9M1 6h6" stroke="#9ab" stroke-width="1.500"/><circle cx="8" cy="8.500" r="2.500" fill="#bfe0c8" stroke="#7cb08a"/></svg><div class="t g" style="left:589px;top:585px">Progress</div>

<svg class="i" style="left:738px;top:585px"><path d="M4 1h4v5h3L6 11 1 6h3z" fill="#fbe39a" stroke="#d39a1e"/></svg>
<svg class="i" style="left:757px;top:585px"><path d="M4 11h4V6h3L6 1 1 6h3z" fill="#fbe39a" stroke="#d39a1e"/></svg>
<div class="a" style="left:772px;top:582px;width:18px;height:18px;background:#e2e0d6;border:1px solid #c6c4ba;box-sizing:border-box"></div>
<svg class="i" style="left:775px;top:585px"><use href="#ln"/></svg>
<div class="a" style="left:793px;top:583px;width:1px;height:16px;background:#b5b2a8"></div>
<svg class="i" style="left:801px;top:585px"><use href="#st"/></svg>
<svg class="i" style="left:820px;top:585px"><use href="#st"/></svg><div class="a" style="left:821px;top:592px;width:5px;height:5px;background:#e8c040"></div>
<svg class="i" style="left:838px;top:585px"><path d="M2 3h6M2 6h8M2 9h5" stroke="#c5cede" stroke-width="1.300"/></svg>
<svg class="i" style="left:857px;top:585px"><rect x="2" y="1" width="7" height="9" fill="#dbe2ea" stroke="#94a3b5"/><path d="M7 7l4 4M11 7l-4 4" stroke="#555" stroke-width="1.200"/></svg>
<div class="a" style="left:874px;top:583px;width:1px;height:16px;background:#b5b2a8"></div>
<svg class="i" style="left:882px;top:585px"><rect x="1" y="3" width="9" height="8" fill="#fff" stroke="#6a6f7a"/><path d="M1 4h9" stroke="#5b7fb4" stroke-width="2"/><path d="M5 6l5-5" stroke="#2c9a3d" stroke-width="2.500"/></svg>
<svg class="i" style="left:901px;top:584px"><rect x="1" y="1" width="10" height="8" fill="#dbe7f6" stroke="#2f5fa6" stroke-width="1.400"/><rect x="3" y="9.500" width="6" height="2" fill="#4f78b4"/></svg><div class="ar" style="left:918px;top:589px"></div>
<svg class="i" style="left:929px;top:585px"><rect x="1" y="2" width="9" height="9" fill="#fbf2cf" stroke="#7a6a3f"/><path d="M1 3.500h9" stroke="#5b7fb4" stroke-width="2"/><path d="M9 0l2 2-2 2-2-2z" fill="#efc13a"/></svg><div class="ar" style="left:947px;top:589px"></div>
<svg class="i" style="left:958px;top:582px;width:10px;height:10px"><use href="#mn"/></svg>
<svg class="i" style="left:976px;top:585px;width:10px;height:10px"><use href="#mx"/></svg>

<div class="t" style="left:294px;top:601px;color:#222;letter-spacing:-.55px">CDT Build Console [ADC_MPC5744P]</div>
<div class="a" style="left:293px;top:612px;width:700px;height:1px;background:#9a9a9a"></div>
<pre class="a" style="left:296px;top:616px;color:#1c1cf0">16:50:03 **** Build of configuration Debug for project ADC_MPC5744P ****
<span style="color:#222">make -j2 all</span>

16:50:03 Build Finished (took 344ms)</pre>
<div class="sb" style="left:982px;top:613px;width:11px;height:127px"></div>
<div class="btn" style="left:982px;top:613px;width:11px;height:11px"><div class="ar" style="left:2px;top:3px;border-top:0;border-bottom:3px solid #666"></div></div>
<div class="sb" style="left:294px;top:740px;width:699px;height:11px"></div>
<div class="btn" style="left:294px;top:740px;width:12px;height:11px"></div>
<div class="btn" style="left:970px;top:740px;width:11px;height:11px"></div>

<!-- Status -->
<svg class="i" style="left:3px;top:758px;width:11px;height:14px"><use href="#pr"/></svg>
<div class="t" style="left:18px;top:759px;color:#222;letter-spacing:-.45px">ADC_MPC5744P</div>
<div class="sep" style="left:805px;top:758px;height:15px"></div>
<div class="a" style="left:0;top:775px;width:999px;height:4px;background:#dcd8cc"></div>
</body></html>
